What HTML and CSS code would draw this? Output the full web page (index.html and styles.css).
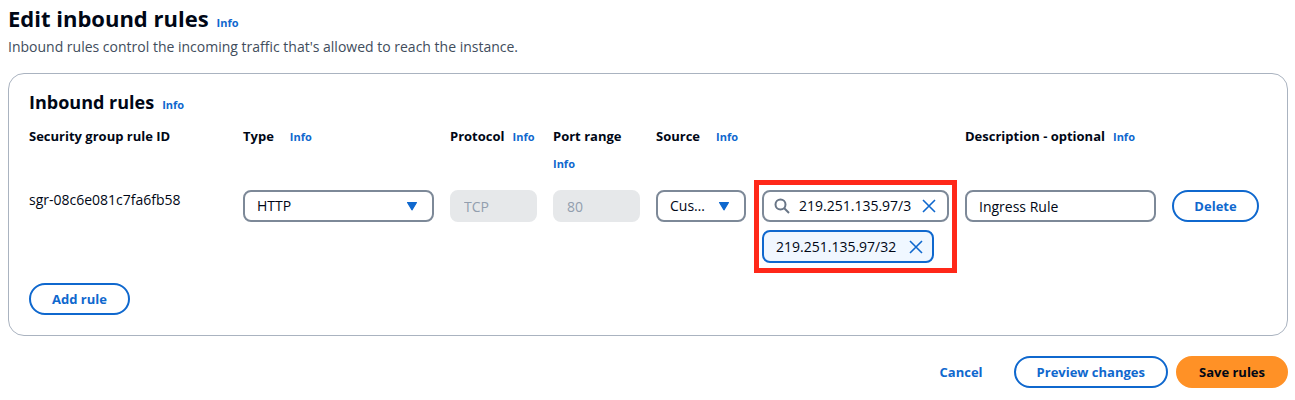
FILE: index.html
```html
<!DOCTYPE html>
<html lang="en">
<head>
<meta charset="utf-8">
<meta name="viewport" content="width=device-width, initial-scale=1">
<title>Edit inbound rules</title>
<link rel="stylesheet" href="styles.css">
</head>
<body>
<main class="page">
  <header class="page-header">
    <div class="heading">
      <h1 class="page-title">Edit inbound rules</h1>
      <a class="info" href="#info">Info</a>
    </div>
    <p class="page-description">Inbound rules control the incoming traffic that's allowed to reach the instance.</p>
  </header>

  <form class="form">
    <section class="card">
      <div class="heading">
        <h2 class="card-title">Inbound rules</h2>
        <a class="info" href="#info-rules">Info</a>
      </div>
      <div class="rules">
        <div class="column-label"><span>Security group rule ID</span></div>
        <div class="column-label column-label-wide"><label for="type">Type</label><a class="info" href="#info-type">Info</a></div>
        <div class="column-label"><label for="protocol">Protocol</label><a class="info" href="#info-protocol">Info</a></div>
        <div class="column-label"><label for="port">Port range</label><a class="info" href="#info-port">Info</a></div>
        <div class="column-label column-label-wide"><label for="source">Source</label><a class="info" href="#info-source">Info</a></div>
        <div class="column-label"><label for="description">Description - optional</label><a class="info" href="#info-description">Info</a></div>
        <div></div>

        <div class="rule-id">sgr-08c6e081c7fa6fb58</div>
        <div class="select">
          <select class="control select-control" id="type"><option>HTTP</option></select>
          <svg class="select-arrow" viewBox="0 0 10 8" aria-hidden="true"><path d="M1 .5h8L5 7z"/></svg>
        </div>
        <input class="control" id="protocol" value="TCP" disabled>
        <input class="control" id="port" value="80" disabled>
        <div class="source">
          <div class="select">
            <select class="control select-control" id="source"><option>Custom</option></select>
            <svg class="select-arrow" viewBox="0 0 10 8" aria-hidden="true"><path d="M1 .5h8L5 7z"/></svg>
          </div>
          <div class="source-values">
            <div class="search">
              <svg class="search-icon" viewBox="0 0 16 16" aria-hidden="true"><circle cx="6.5" cy="6.5" r="5"/><path d="M10 10l5 5"/></svg>
              <input class="search-input" aria-label="Source address" value="219.251.135.97/32">
              <button class="icon-button" type="button" aria-label="Clear"><svg class="close-icon" viewBox="0 0 16 16" aria-hidden="true"><path d="M2 2l12 12M14 2L2 14"/></svg></button>
            </div>
            <div class="token">
              <span>219.251.135.97/32</span>
              <button class="icon-button" type="button" aria-label="Remove 219.251.135.97/32"><svg class="close-icon" viewBox="0 0 16 16" aria-hidden="true"><path d="M2 2l12 12M14 2L2 14"/></svg></button>
            </div>
          </div>
        </div>
        <input class="control" id="description" value="Ingress Rule">
        <button class="button button-fill" type="button">Delete</button>
      </div>
      <button class="button" type="button">Add rule</button>
    </section>

    <div class="actions">
      <button class="button button-link" type="button">Cancel</button>
      <button class="button" type="button">Preview changes</button>
      <button class="button button-primary" type="submit">Save rules</button>
    </div>
  </form>
</main>
</body>
</html>
```
FILE: styles.css
```css
* {
  box-sizing: border-box;
}

body {
  margin: 0;
  background: #fff;
  color: #000716;
  font-family: "Open Sans", "Noto Sans", sans-serif;
  font-size: 14px;
  line-height: 20px;
}

button,
input,
select {
  font: inherit;
  color: inherit;
}

h1,
h2,
p {
  margin: 0;
}

.page {
  padding: 3px 7px 12px 8px;
}

.page-header {
  margin-bottom: 16px;
}

.heading {
  display: flex;
  align-items: baseline;
  gap: 8px;
}

.page-title {
  font-size: 22px;
  line-height: 30px;
  font-weight: 700;
}

.card-title {
  font-size: 18px;
  line-height: 24px;
  font-weight: 700;
}

.page-description {
  padding-top: 4px;
  color: #414d5c;
}

.info {
  color: #0f68ce;
  font-size: 11px;
  font-weight: 700;
  text-decoration: none;
}

.card {
  padding: 16px 20px 20px;
  border: 1px solid #aab3c0;
  border-radius: 16px;
}

.rules {
  display: grid;
  grid-template-columns:
    minmax(0, 198fr) minmax(0, 191fr) minmax(0, 87fr) minmax(0, 87fr)
    minmax(0, 293fr) minmax(0, 191fr) minmax(0, 87fr);
  column-gap: 16px;
  row-gap: 12px;
  align-items: start;
  padding: 7px 8px 20px 0;
}

.column-label {
  display: flex;
  flex-wrap: wrap;
  align-items: baseline;
  column-gap: 8px;
  font-size: 13px;
  line-height: 28px;
  font-weight: 700;
  white-space: nowrap;
}

.column-label-wide {
  column-gap: 16px;
}

.control {
  display: block;
  width: 100%;
  min-width: 0;
  height: 32px;
  padding: 0 12px;
  border: 2px solid #7d8998;
  border-radius: 8px;
  background: #fff;
}

.control:disabled {
  border-color: #e6e8ea;
  background: #e6e8ea;
  color: #929eae;
}

.select {
  position: relative;
}

.select-control {
  appearance: none;
  padding-right: 36px;
  overflow: hidden;
  text-overflow: ellipsis;
}

.select-arrow {
  position: absolute;
  top: 12px;
  right: 16px;
  width: 12px;
  height: 9px;
  fill: #0f68ce;
  stroke: #0f68ce;
  stroke-linejoin: round;
  pointer-events: none;
}

.source {
  display: grid;
  grid-template-columns: minmax(0, 90fr) minmax(0, 187fr);
  gap: 16px;
  align-items: start;
}

.source-values {
  position: relative;
  display: flex;
  flex-direction: column;
  align-items: flex-start;
  gap: 8px;
}

.source-values::after {
  content: "";
  position: absolute;
  inset: -10px -8px;
  border: 5px solid #ff2819;
  pointer-events: none;
}

.search {
  display: flex;
  align-items: center;
  width: 100%;
  height: 32px;
  padding: 0 10px;
  border: 2px solid #7d8998;
  border-radius: 8px;
}

.search-input {
  flex: 1;
  min-width: 0;
  margin: 0 10px 0 9px;
  padding: 0;
  border: 0;
  background: none;
}

.search-icon,
.close-icon {
  display: block;
  flex: none;
  width: 16px;
  height: 16px;
  fill: none;
  stroke: #687586;
  stroke-width: 2;
}

.close-icon {
  stroke: #0f68ce;
  stroke-width: 1.6;
}

.icon-button {
  padding: 0;
  border: 0;
  background: none;
}

.token {
  display: flex;
  align-items: center;
  gap: 12px;
  height: 33px;
  padding: 0 8px 0 12px;
  border: 2px solid #0f68ce;
  border-radius: 8px;
  background: #f0f7ff;
}

.button {
  height: 32px;
  padding: 0 21px;
  border: 2px solid #0f68ce;
  border-radius: 20px;
  background: #fff;
  color: #0f68ce;
  font-size: 13px;
  font-weight: 700;
  white-space: nowrap;
}

.button-fill {
  width: 100%;
  padding: 0;
}

.button-link {
  border-color: transparent;
}

.button-primary {
  border-color: #ff9126;
  background: #ff9126;
  color: #000716;
}

.actions {
  display: flex;
  justify-content: flex-end;
  gap: 8px;
  padding-top: 20px;
}
```
